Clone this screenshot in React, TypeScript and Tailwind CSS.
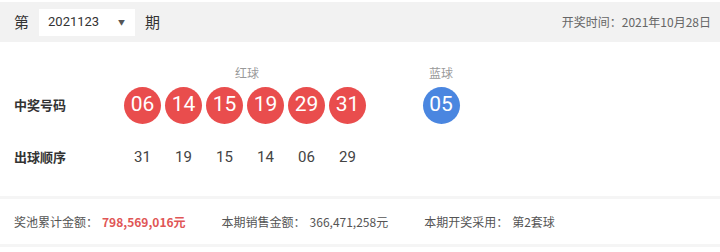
import React from 'react';

const red = ['06', '14', '15', '19', '29', '31'];
const order = ['31', '19', '15', '14', '06', '29'];

const font = { fontFamily: '"Noto Sans CJK SC", "Noto Sans", sans-serif' };

const App: React.FC = () => {
  return (
    <div className="w-[720px] h-[252px] bg-white text-[#333] overflow-hidden" style={font}>
      {/* Header bar */}
      <div className="mt-[2px] h-[40px] bg-[#f2f2f2] flex items-center pl-[14px] pr-[9px]">
        <span className="text-[15px] text-[#333]">第</span>
        <div className="ml-[10px] w-[96px] h-[27px] bg-white flex items-center justify-between pl-[9px] pr-[10px]">
          <span className="text-[13px] text-[#333] font-['Roboto']">2021123</span>
          <span className="text-[7px] text-[#555]">▼</span>
        </div>
        <span className="ml-[10px] text-[15px] text-[#333]">期</span>
        <span className="ml-auto text-[12px] text-[#666]">开奖时间：2021年10月28日</span>
      </div>

      {/* Numbers */}
      <div className="bg-white h-[154px] flex flex-col">
        <div className="flex items-end h-[44px] pb-[4px]">
          <div className="w-[124px]" />
          <div className="w-[246px] flex justify-center text-[12px] text-[#999]">红球</div>
          <div className="w-[100px] flex justify-center text-[12px] text-[#999] ml-[21px]">蓝球</div>
        </div>
        <div className="flex items-center h-[38px]">
          <div className="w-[124px] pl-[14px] text-[13px] font-bold text-[#333]">中奖号码</div>
          <div className="flex gap-[4px] w-[246px]">
            {red.map(n => (
              <div key={n} className="w-[37px] h-[37px] rounded-full bg-[#e94d4d] text-white text-[21px] font-['Roboto'] flex items-center justify-center">
                {n}
              </div>
            ))}
          </div>
          <div className="w-[100px] flex justify-center ml-[21px]">
            <div className="w-[37px] h-[37px] rounded-full bg-[#4a86e0] text-white text-[21px] font-['Roboto'] flex items-center justify-center">
              05
            </div>
          </div>
        </div>
        <div className="flex items-center h-[50px] pt-[16px]">
          <div className="w-[124px] pl-[14px] text-[13px] font-bold text-[#333]">出球顺序</div>
          <div className="flex gap-[4px]">
            {order.map(n => (
              <div key={n} className="w-[37px] flex justify-center text-[15px] text-[#444] font-['Roboto']">
                {n}
              </div>
            ))}
          </div>
        </div>
      </div>

      {/* Summary */}
      <div className="h-[3px] bg-[#f5f5f5]" />
      <div className="bg-white h-[45px] flex items-center px-[14px] text-[12px] text-[#555]">
        <span>奖池累计金额：</span>
        <span className="ml-[4px] text-[#e05656] font-bold">798,569,016元</span>
        <span className="ml-[36px]">本期销售金额：</span>
        <span className="ml-[4px]">366,471,258元</span>
        <span className="ml-[36px]">本期开奖采用：</span>
        <span className="ml-[4px]">第2套球</span>
      </div>
      <div className="h-[3px] bg-[#f5f5f5]" />
    </div>
  );
};

export default App;
